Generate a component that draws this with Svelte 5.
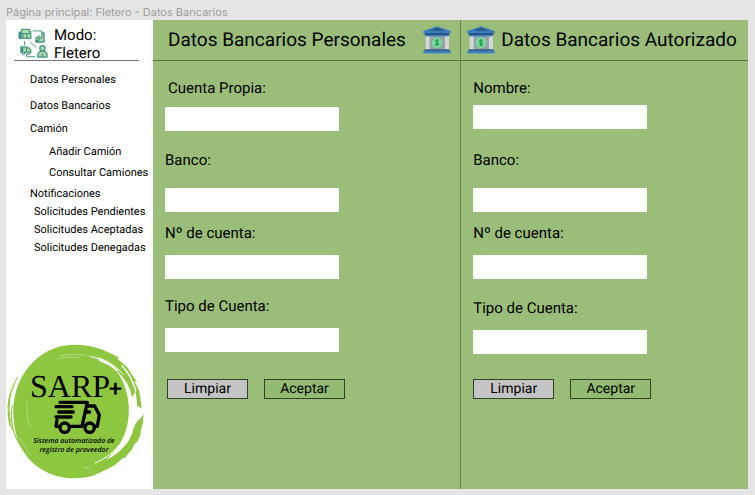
<script>
  const menu = [
    { text: 'Datos Personales', kind: 'main' },
    { text: 'Datos Bancarios', kind: 'main wide' },
    { text: 'Camión', kind: 'main near' },
    { text: 'Añadir Camión', kind: 'deep near' },
    { text: 'Consultar Camiones', kind: 'deep close' },
    { text: 'Notificaciones', kind: 'main close' },
    { text: 'Solicitudes Pendientes', kind: 'sub' },
    { text: 'Solicitudes Aceptadas', kind: 'sub' },
    { text: 'Solicitudes Denegadas', kind: 'sub' }
  ];
  const panels = [
    {
      id: 'personal',
      title: 'Datos Bancarios Personales',
      fields: ['Cuenta Propia:', 'Banco:', 'Nº de cuenta:', 'Tipo de Cuenta:']
    },
    {
      id: 'autorizado',
      title: 'Datos Bancarios Autorizado',
      fields: ['Nombre:', 'Banco:', 'Nº de cuenta:', 'Tipo de Cuenta:']
    }
  ];
</script>

{#snippet bank()}
  <svg class="bank" viewBox="0 0 84 84" aria-hidden="true">
    <path d="M10 30h66v42H10z" fill="#95a5a5" />
    <path d="M8 31h12v40H8zM66 31h12v40H66z" fill="#d3d7d8" />
    <path d="M1 15 42 1l41 14v7H1z" fill="#3b7fc0" />
    <path d="M17 14 42 5l25 9z" fill="#285680" />
    <path d="M5 21h74v7H5z" fill="#285680" />
    <path d="M8 27h68v4H8z" fill="#3b7fc0" />
    <path d="M5 70h74v5H5z" fill="#285680" />
    <path d="M1 74h82v8H1z" fill="#3b7fc0" />
    <circle cx="42" cy="50" r="16" fill="#7bd7a0" />
    <path d="M47 45c-1-3-10-4-10 1 0 4 10 3 10 8 0 4-9 4-11 0M42 39v22" fill="none" stroke="#159947" stroke-width="3" />
  </svg>
{/snippet}

<div class="page">
  <p class="caption">Página principal: Fletero - Datos Bancarios</p>
  <div class="frame">
    <aside>
      <div class="mode">
        <svg class="network" viewBox="0 0 92 92" aria-hidden="true">
          <g fill="none" stroke="#4a9a8c" stroke-width="4">
            <path d="M45 9h28v7M20 40v13M38 43l18 17M26 80v8h27" stroke-width="3" />
            <path d="M11 4h24v8h4v20H4V13h7zM4 17h35M15 17v14M27 17v14" fill="#b5dda0" />
            <path d="M55 43V31l9-6v9l9-6V15h7v28z" fill="#a9d7a5" />
            <path d="M9 58h17v17H9zM26 61h8l5 7v7H26z" fill="#b5dda0" />
            <circle cx="17" cy="77" r="4" fill="#fff" /><circle cx="33" cy="77" r="4" fill="#fff" />
            <circle cx="75" cy="62" r="8" fill="#a9d7a5" />
            <path d="M61 89V79q4-8 14-8t14 8v10zM75 78v11" fill="#a9d7a5" />
          </g>
          <path d="M2 17h9v15H2zM55 36h9v8h-9zM9 59h7v14H9z" fill="#3d9086" />
        </svg>
        <strong>Modo:<br />Fletero</strong>
      </div>
      <nav>
        {#each menu as item}
          <a href="#seccion" class={item.kind}>{item.text}</a>
        {/each}
      </nav>
      <svg class="logo" viewBox="6 342 140 140" role="img" aria-label="SARP+ Sistema automatizado de registro de proveedor">
        <g transform="translate(0 335) scale(0.33333)">
          <path
            fill="#8dc63f"
            d="M40 238C36 128 112 30 222 29c50 0 91 13 133 38l-3 4 30 26 12 19 18 26-9-4 14 28 4 22 3 26 1 30 6-6-3 29-7 26 2 3-12 26-6 3-9 18-22 26-5-1-23 21-31 17-32 15c-32 10-75 13-113 2C88 399 43 332 40 238Z"
          />
          <g fill="none" stroke="#8dc63f" stroke-linecap="round">
            <path d="M52 127c-24 46-31 89-20 132M30 178c-7 34-8 69 1 97M37 211c-9 42 2 93 31 129M25 230c1 24 5 36 12 54" stroke-width="3" />
            <path d="M43 145c-13 25-19 49-19 74M34 250c2 40 19 75 40 103M67 337c20 32 44 54 75 70" stroke-width="2" />
          </g>
          <path
            fill="#fff"
            d="M350 108q39 34 46 78l11-16 5 43 17 10-1 20q-25 19-32 54-19 48-78 78 43-39 58-83 16-49 8-100-9-50-34-84Z"
          />
          <g fill="none" stroke="#fff" stroke-linecap="round">
            <path d="M270 64c52 12 84 37 104 78M294 68c32 11 57 27 76 51" stroke-width="3" />
            <path d="M300 76c20 7 38 17 52 31" stroke-width="6" />
            <path d="M366 92c20 21 33 45 41 73M386 118c10 18 17 31 21 51" stroke-width="4" />
            <path d="M369 315c-22 32-48 54-83 69M382 299c-13 30-31 51-51 69" stroke-width="3" />
            <path d="M172 72c25-6 44-7 65-5M180 63c19-5 46-7 75-2" stroke-width="1" />
            <path d="M82 200c-3 30 0 52 8 74M59 307c9 21 19 36 33 51M250 398c7 0 14 0 20-1" stroke-width="1" />
          </g>
          <g fill="none" stroke="#000" stroke-width="10" stroke-linecap="round" stroke-linejoin="round">
            <path d="M180 202h82l-16 72h-33M178 274h-10l3-18M262 213h22l14 27-6 34h-7M168 215h48M176 231h44M168 246h45M260 231h9" />
            <circle cx="194" cy="278" r="14" /><circle cx="269" cy="278" r="14" />
          </g>
        </g>
        <text class="brand" x="30" y="397">SARP</text>
        <text class="plus" x="109" y="396">+</text>
        <text class="slogan" x="74" y="443">Sistema automatizado de</text>
        <text class="slogan" x="74" y="452">registro de proveedor</text>
      </svg>
    </aside>

    <main>
      {#each panels as panel}
        <section class={panel.id}>
          <header>
            {#if panel.id === 'autorizado'}{@render bank()}{/if}
            <h2>{panel.title}</h2>
            {#if panel.id === 'personal'}{@render bank()}{/if}
          </header>
          <form onsubmit={(event) => event.preventDefault()}>
            {#each panel.fields as field, i}
              <div class="field">
                <label for="{panel.id}-{i}">{field}</label>
                <input id="{panel.id}-{i}" type="text" />
              </div>
            {/each}
            <div class="actions">
              <button type="reset" class="clear">Limpiar</button>
              <button type="submit">Aceptar</button>
            </div>
          </form>
        </section>
      {/each}
    </main>
  </div>
</div>

<style>
  :global(body) {
    background: #e5e5e5;
  }
  .page {
    box-sizing: border-box;
    min-height: 100vh;
    display: flex;
    flex-direction: column;
    padding: 4px 7px 6px 6px;
    font-family: Roboto, 'Liberation Sans', sans-serif;
    color: #000;
    text-rendering: geometricPrecision;
  }
  .caption {
    margin: 0;
    font: 11px/16px Inter, 'Liberation Sans', sans-serif;
    color: #a0a0a0;
  }
  .frame {
    flex: 1;
    display: flex;
    background: #fff;
  }
  aside {
    width: 147px;
    flex: none;
    display: flex;
    flex-direction: column;
  }
  .mode {
    display: flex;
    gap: 6px;
    height: 40px;
    margin: 0 14px 0 8px;
    padding-left: 4px;
    border-bottom: 1px solid #777;
  }
  .network {
    width: 30px;
    height: 30px;
    margin-top: 8px;
  }
  .mode strong {
    font-size: 15px;
    line-height: 18px;
    font-weight: 400;
    padding-top: 6px;
  }
  nav {
    display: flex;
    flex-direction: column;
    padding-top: 10px;
    font-size: 11px;
    line-height: 18px;
    white-space: nowrap;
  }
  nav a {
    color: inherit;
    text-decoration: none;
  }
  .main {
    padding-left: 24px;
  }
  .sub {
    padding-left: 28px;
  }
  .deep {
    padding-left: 43px;
  }
  .wide {
    margin-top: 8px;
  }
  .near {
    margin-top: 5px;
  }
  .close {
    margin-top: 3px;
  }
  .logo {
    width: 140px;
    height: 140px;
    margin: auto 0 7px;
  }
  .brand {
    font: 32px 'Liberation Serif', serif;
  }
  .plus {
    font: 22px Lato, sans-serif;
    stroke: #000;
  }
  .slogan {
    font: italic 600 7px 'Open Sans', sans-serif;
    text-anchor: middle;
  }
  main {
    flex: 1;
    display: flex;
    background: #9abd79;
  }
  section {
    box-sizing: border-box;
    min-width: 0;
  }
  .personal {
    flex: 15;
    border-right: 1px solid #6a8456;
  }
  .autorizado {
    flex: 14;
  }
  header {
    display: flex;
    align-items: center;
    height: 40px;
    border-bottom: 1px solid #586c46;
    white-space: nowrap;
  }
  h2 {
    margin: 0;
    font-size: 19px;
    line-height: 24px;
    font-weight: 400;
  }
  .bank {
    width: 28px;
    height: 28px;
    flex: none;
  }
  .personal header {
    justify-content: space-between;
    padding: 0 9px 0 15px;
  }
  .autorizado header {
    gap: 6px;
    padding-left: 6px;
  }
  form {
    padding: 17px 12px;
  }
  .field {
    display: flex;
    flex-direction: column;
    align-items: flex-start;
    gap: 12px;
  }
  .field:nth-child(1) {
    gap: 9px;
  }
  .field:nth-child(2) {
    gap: 18px;
    margin: 19px 0 11px;
  }
  .field:nth-child(4) {
    margin-top: 17px;
  }
  .autorizado .field:nth-child(1) {
    gap: 7px;
  }
  .autorizado .field:nth-child(2) {
    margin-top: 21px;
  }
  .autorizado .field:nth-child(4) {
    margin-top: 19px;
  }
  label {
    font-size: 15px;
    line-height: 20px;
  }
  .personal .field:nth-child(1) label {
    padding-left: 3px;
  }
  input {
    box-sizing: border-box;
    width: 174px;
    height: 24px;
    padding: 0 6px;
    border: 0;
    background: #fff;
    font: inherit;
  }
  .actions {
    display: flex;
    gap: 16px;
    margin-top: 27px;
  }
  .personal .actions {
    padding-left: 2px;
  }
  .autorizado .actions {
    margin-top: 25px;
  }
  button {
    width: 81px;
    height: 20px;
    padding: 0;
    border: 1px solid #33402a;
    background: #92bc72;
    color: #000;
    font: 14px/18px Roboto, 'Liberation Sans', sans-serif;
    text-rendering: inherit;
  }
  .clear {
    background: #c4c4c4;
  }
</style>
